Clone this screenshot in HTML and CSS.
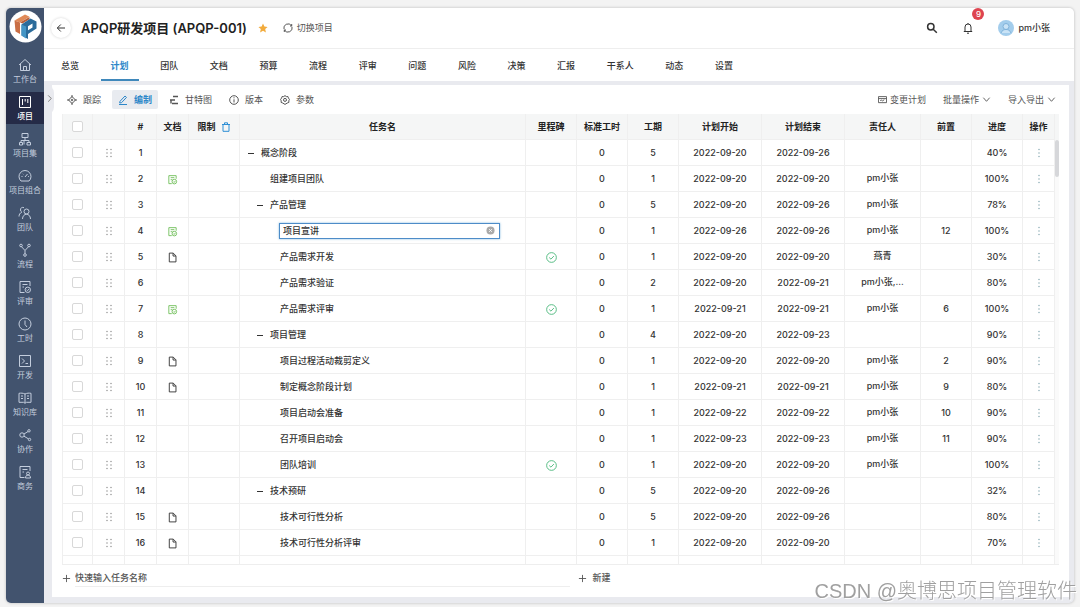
FILE: index.html
```html
<!DOCTYPE html>
<html lang="zh-CN">
<head>
<meta charset="utf-8">
<meta name="viewport" content="width=device-width, initial-scale=1">
<title>APQP研发项目 (APQP-001)</title>
<link rel="stylesheet" href="styles.css">
</head>
<body>
<svg class="sprite" aria-hidden="true">
  <symbol id="i-doc" viewBox="0 0 12 12"><path d="M2.500 1.200h4.300l3 3v6.600H2.500zM6.600 1.400v3h3"/></symbol>
  <symbol id="i-docok" viewBox="0 0 12 12"><path d="M10 5.200V1.800H2v8.700h3.200M4 4h4M4 6.200h1.800"/><circle cx="8" cy="8.300" r="2.500"/><path d="M6.900 8.300l.9.9 1.400-1.600"/></symbol>
  <symbol id="i-ok" viewBox="0 0 12 12"><circle cx="6" cy="6" r="5.300"/><path d="M3.500 6l1.900 1.800 3.200-3.400"/></symbol>
  <symbol id="i-down" viewBox="0 0 10 10"><path d="M1.500 3L5 7l3.500-4"/></symbol>
</svg>
<div class="app">
  <aside class="sidebar">
    <a class="logo" href="#" aria-label="首页">
      <svg viewBox="0 0 33 33"><circle cx="16.500" cy="16.500" r="16" fill="#fff"/><path d="M5.500 10.500L16 4.500l4.500 2.200-9.500 5.800z" fill="#e08a58"/><path d="M5.500 10.500l5.500 2V24l-4.500-2.500z" fill="#c96f45"/><path d="M11 12.500L20.500 7v2.200l-7 4.300z" fill="#b85f3a"/><path d="M12.500 14.500l9-6 6 3v7l-8.500 5.500v5l-6.500-3.500z" fill="#2c6c9b"/><path d="M12.500 14.500l4.500 2v12l-4.500-3z" fill="#4496c6"/><path d="M19 16.200l4.500-2.800v4L19 20.200z" fill="#fff"/></svg>
    </a>
    <nav class="menu" aria-label="主导航">
      <a href="#"><svg viewBox="0 0 14 14"><path d="M1 7l6-5.500L13 7M2.500 6v6.500h9V6M5.500 12.500V8.500h3v4"/></svg>工作台</a>
      <a href="#" class="active"><svg viewBox="0 0 14 14"><path d="M1.500 1.500h11v11h-11zM4.500 4v6M7.200 4v2.500M9.800 4v4"/></svg>项目</a>
      <a href="#"><svg viewBox="0 0 14 14"><path d="M4 1.500h6v4H4zM7 5.500v3M3 10.500v-2h8v2M1.500 10.500h3v2.500h-3zM6 8.500v4M9 10.500h3.500V13H9z"/></svg>项目集</a>
      <a href="#"><svg viewBox="0 0 14 14"><path d="M3 12a6 6 0 1 1 8 0zM7 8l2.500-3M3.500 7.500h1M4.800 4.800l.5.5M10 7.500h.8"/></svg>项目组合</a>
      <a href="#"><svg viewBox="0 0 14 14"><circle cx="8.500" cy="5.500" r="2.500"/><path d="M4.500 13c0-3 2-4.800 4-4.800s4 1.800 4 4.800M6 1.700C4 .8 2.300 2 2.500 4c0 1 .5 1.700 1.300 2.200C2 7 1 8.500 1 10.500"/></svg>团队</a>
      <a href="#"><svg viewBox="0 0 14 14"><circle cx="3" cy="2.500" r="1.300"/><circle cx="11" cy="2.500" r="1.300"/><circle cx="7" cy="12" r="1.300"/><path d="M3.500 3.700L7 7.500l3.500-3.800M7 7.500v3.200"/></svg>流程</a>
      <a href="#"><svg viewBox="0 0 14 14"><path d="M12 6V1.500H2v11h4.500M4.500 4.500h5M4.500 7H6"/><circle cx="9.800" cy="9.800" r="2.700"/><path d="M8.600 9.800l.9.900 1.600-1.700"/></svg>评审</a>
      <a href="#"><svg viewBox="0 0 14 14"><circle cx="7" cy="7" r="6"/><path d="M7 3.500V7.500l2 2.500"/></svg>工时</a>
      <a href="#"><svg viewBox="0 0 14 14"><path d="M1.500 1.500h11v11h-11zM4 4.500L6.500 7 4 9.500M7.500 9.500H10"/></svg>开发</a>
      <a href="#"><svg viewBox="0 0 14 14"><path d="M7 3C5 2 3 2 1 2.300v9h4.500L7 12.300l1.500-1H13v-9C11 2 9 2 7 3v9M3 5h2M3 7.500h2M9 5h2M9 7.500h2"/></svg>知识库</a>
      <a href="#"><svg viewBox="0 0 14 14"><circle cx="4" cy="7" r="2.200"/><circle cx="11" cy="2.800" r="1.200"/><circle cx="11.500" cy="11.500" r="1.200"/><path d="M6 6l4-2.500M6 8.200l4.500 2.700"/></svg>协作</a>
      <a href="#"><svg viewBox="0 0 14 14"><path d="M12 6V1.500H2v11h4.500M4.500 4.500h5M4.500 7H6"/><circle cx="10" cy="8.500" r="1.500"/><path d="M7.500 13c0-1.800 1-3 2.500-3s2.500 1.200 2.500 3z"/></svg>商务</a>
    </nav>
  </aside>
  <main class="main">
    <header class="topbar">
      <button class="back" aria-label="返回"><svg viewBox="0 0 10 10"><path d="M9 5H1.500M4.800 1.500L1.300 5l3.500 3.500"/></svg></button>
      <h1>APQP研发项目 (APQP-001)</h1>
      <svg class="star" viewBox="0 0 10 10"><path d="M5 .5l1.400 3 3.200.4-2.400 2.200.7 3.300L5 7.800 2.100 9.400l.7-3.300L.4 3.900l3.200-.4z"/></svg>
      <button class="switch"><svg viewBox="0 0 10 10"><path d="M1 6.200A4.200 4.200 0 0 1 8.500 2.700M9 3.800A4.200 4.200 0 0 1 1.500 7.300M8.700 1v2H7M1.300 9V7H3"/></svg>切换项目</button>
      <div class="user">
        <button aria-label="搜索"><svg class="icon-lg search" viewBox="0 0 12 12"><circle cx="4.800" cy="4.800" r="3.200"/><path d="M7.200 7.200L10.800 10.800"/></svg></button>
        <button class="bell" aria-label="通知"><svg class="icon-lg" viewBox="0 0 12 12"><path d="M1.800 9.500h8.400M3 9.500V5a3 3 0 0 1 6 0v4.500M5 11.200h2M6 1v1"/></svg><span class="badge">9</span></button>
        <a class="account" href="#"><svg viewBox="0 0 16 16"><circle cx="8" cy="8" r="8" fill="#a3cdec" stroke="none"/><circle cx="8" cy="6.500" r="3" fill="#c9e3f6" stroke="#7fb2da"/><path d="M3 13c1-2.800 3-3.500 5-3.500s4 .7 5 3.500" fill="#c9e3f6" stroke="#7fb2da"/></svg>pm小张</a>
      </div>
    </header>
    <nav class="tabs" aria-label="项目导航">
      <div class="tab-list">
        <a href="#">总览</a><a href="#" class="active">计划</a><a href="#">团队</a><a href="#">文档</a><a href="#">预算</a><a href="#">流程</a><a href="#">评审</a><a href="#">问题</a><a href="#">风险</a><a href="#">决策</a><a href="#">汇报</a><a href="#">干系人</a><a href="#">动态</a><a href="#">设置</a>
      </div>
    </nav>
    <section class="panel">
      <button class="handle" aria-label="展开"><svg viewBox="0 0 10 10"><path d="M3.500 1.500L7 5 3.500 8.500"/></svg></button>
      <div class="toolbar">
        <button><svg viewBox="0 0 10 10"><path d="M5 1.500L8.500 5 5 8.500 1.500 5zM5 0v2.500M5 7.500V10M0 5h2.500M7.500 5H10"/><circle cx="5" cy="5" r=".8"/></svg>跟踪</button>
        <button class="active"><svg viewBox="0 0 10 10"><path d="M2 6.300L7 1l1.500 1.400-5 5.300L1.700 8zM1 9.500h8"/></svg>编制</button>
        <button><svg viewBox="0 0 10 10"><path d="M4 1.500h5M1 5h5M3 8.500h6M2 5v3.500" stroke-width="1.400"/></svg>甘特图</button>
        <button><svg viewBox="0 0 10 10"><circle cx="5" cy="5" r="4.300"/><path d="M5 4.300v3.200M5 2.300v1"/></svg>版本</button>
        <button><svg viewBox="0 0 10 10"><path d="M5 .6l1.300 1 1.600-.1.500 1.600 1.100 1.200-.7 1.500.1 1.600-1.600.6L5 9.400 2.700 8l-1.600-.6.1-1.600L.5 4.300l1.100-1.200.5-1.600 1.600.1z"/><circle cx="5" cy="4.900" r="1.500"/></svg>参数</button>
        <div class="toolbar-right">
          <button><svg viewBox="0 0 10 10"><path d="M.5 1.800h9v6.700h-9zM.5 4h9M2.500 6.500l1-1 1.500 1 2-1.200"/></svg>变更计划</button>
          <button>批量操作<svg><use href="#i-down"/></svg></button>
          <button>导入导出<svg><use href="#i-down"/></svg></button>
        </div>
      </div>
      <div class="grid">
        <table>
          <colgroup><col class="w-xs"><col class="w-sm"><col class="w-sm"><col class="w-sm"><col class="w-md"><col><col class="w-md"><col class="w-md"><col class="w-md"><col class="w-lg"><col class="w-lg"><col class="w-owner"><col class="w-md"><col class="w-md"><col class="w-sm"></colgroup>
          <thead>
            <tr>
              <th><input type="checkbox" aria-label="全选"></th><th></th><th>#</th><th>文档</th>
              <th class="limit">限制<svg viewBox="0 0 10 10"><path d="M1 2.500h8M2 2.500v6.800h6V2.500M3.500 2.300V.8h3v1.500"/></svg></th>
              <th>任务名</th><th>里程碑</th><th>标准工时</th><th>工期</th><th>计划开始</th><th>计划结束</th><th>责任人</th><th>前置</th><th>进度</th><th>操作</th>
            </tr>
          </thead>
          <tbody id="rows"></tbody>
        </table>
        <div class="track"><div class="thumb"></div></div>
      </div>
      <div class="quick">
        <label class="quick-field"><svg viewBox="0 0 10 10"><path d="M5 1v8M1 5h8"/></svg><input type="text" placeholder="快速输入任务名称" aria-label="快速输入任务名称"></label>
        <button><svg viewBox="0 0 10 10"><path d="M5 1v8M1 5h8"/></svg>新建</button>
      </div>
    </section>
  </main>
</div>
<div class="watermark">CSDN @奥博思项目管理软件</div>
<script src="script.js"></script>
</body>
</html>
```
FILE: styles.css
```css
* { box-sizing: border-box; }

body {
  margin: 0;
  min-height: 100vh;
  padding: 8px 6px 4px;
  display: flex;
  background: #f3f3f3;
  color: #333;
  font: 500 9px/14px Inter, "Noto Sans CJK SC", sans-serif;
}

a { color: inherit; text-decoration: none; }

button {
  margin: 0;
  padding: 0;
  border: 0;
  background: none;
  color: inherit;
  font: inherit;
  cursor: pointer;
}

svg {
  flex: none;
  width: 10px;
  height: 10px;
  fill: none;
  stroke: currentColor;
  stroke-width: 1;
}

.sprite { position: absolute; width: 0; height: 0; }

.app {
  flex: 1;
  min-width: 0;
  display: flex;
  background: #e9eaef;
  border-radius: 5px;
  overflow: hidden;
  box-shadow: 0 0 3px rgba(0, 0, 0, 0.25);
}

/* Sidebar */
.sidebar {
  flex: none;
  width: 38px;
  background: #42536e;
  color: #c3cddd;
}

.logo { display: flex; justify-content: center; padding: 2px 0 12px; }
.logo svg { width: 33px; height: 33px; stroke: none; }

.menu { display: flex; flex-direction: column; gap: 5px; }

.menu a {
  display: flex;
  flex-direction: column;
  align-items: center;
  gap: 2px;
  padding: 3px 0;
  font-size: 8px;
  line-height: 10px;
  font-weight: 400;
  white-space: nowrap;
}

.menu svg { width: 14px; height: 14px; }
.menu .active { background: #252b47; color: #fff; font-weight: 500; }

/* Header */
.main { flex: 1; min-width: 0; display: flex; flex-direction: column; }

.topbar {
  display: flex;
  align-items: center;
  height: 41px;
  padding: 0 24px 0 7px;
  background: #fff;
  border-bottom: 1px solid #eee;
}

.back {
  display: grid;
  place-items: center;
  width: 20px;
  height: 20px;
  border-radius: 50%;
  box-shadow: 0 0 3px rgba(0, 0, 0, 0.18);
}

h1 { margin: 0 11px 0 10px; font-size: 13px; line-height: 20px; font-weight: 600; color: #222; }
.star { fill: #f2ab3c; stroke: none; }
.switch { display: flex; align-items: center; gap: 4px; margin-left: 15px; color: #555; font-weight: 400; }

.user { display: flex; align-items: center; gap: 24px; margin-left: auto; }
.user button { display: flex; }
.icon-lg { width: 12px; height: 12px; }
.search { stroke-width: 1.5; }
.bell { position: relative; }

.badge {
  position: absolute;
  top: -14px;
  left: 10px;
  width: 12px;
  height: 12px;
  border-radius: 50%;
  background: #de4450;
  color: #fff;
  font-size: 8px;
  line-height: 12px;
}

.account { display: flex; align-items: center; gap: 4px; }
.account svg { width: 16px; height: 16px; }

/* Tabs */
.tabs { padding: 0 7px; background: #fff; }
.tab-list { display: flex; justify-content: space-between; max-width: 692px; }
.tab-list a { padding: 10px 10px 6px; border-bottom: 2px solid transparent; }
.tab-list .active { color: #2d87c9; border-color: #3f88bb; font-weight: 600; }

/* Plan panel */
.panel {
  position: relative;
  flex: 1;
  display: flex;
  flex-direction: column;
  margin: 4px 5px 6px 8px;
  padding: 0 10px;
  background: #fff;
}

.handle {
  position: absolute;
  top: 0;
  left: -8px;
  width: 10px;
  height: 30px;
  padding-left: 1px;
  border-radius: 0 8px 8px 0;
  background: #e9eaef;
  color: #777;
}

.handle svg { width: 9px; height: 9px; }

.toolbar {
  display: flex;
  gap: 5px;
  margin: 5px -3px 5px -1px;
  color: #555;
}

.toolbar button {
  display: flex;
  align-items: center;
  gap: 6px;
  height: 19px;
  padding: 0 6px;
  border-radius: 2px;
  font-weight: 400;
  white-space: nowrap;
}

.toolbar .active { background: #e8ebf0; color: #2d87c9; font-weight: 600; }
.toolbar-right { display: flex; gap: 5px; margin-left: auto; }
.toolbar-right button { gap: 3px; }
.toolbar-right svg { width: 9px; height: 9px; }

.grid { display: flex; border-bottom: 1px solid #eee; }

table {
  flex: 1;
  min-width: 0;
  table-layout: fixed;
  border-collapse: separate;
  border-spacing: 0;
}

.w-xs { width: 31px; }
.w-sm { width: 32px; }
.w-md { width: 51px; }
.w-lg { width: 83px; }
.w-owner { width: 76px; }

th, td {
  height: 26px;
  padding: 0;
  border: solid #efefef;
  border-width: 0 1px 1px 0;
  text-align: center;
  vertical-align: middle;
  white-space: nowrap;
}

th:first-child, td:first-child { border-left-width: 1px; }
th { background: #f5f6f6; font-weight: 600; color: #222; }
th svg, td svg { vertical-align: middle; }
.limit svg { margin-left: 5px; color: #2d8fd5; }
.rest td { height: 8px; border-bottom: 0; }
td.owner { padding-bottom: 2px; }

input[type="checkbox"] {
  appearance: none;
  display: block;
  width: 11px;
  height: 11px;
  margin: 0 auto;
  border: 1px solid #d8d8d8;
  border-radius: 2px;
  background: #fff;
}

.drag, .more { color: #888; fill: currentColor; stroke: none; }
.more { color: #7fa3ad; }
.doc { width: 11px; height: 11px; color: #333; }
.doc-ok { width: 11px; height: 11px; color: #72bf5c; }
.ok { width: 11px; height: 11px; color: #4cb87c; }

.name { display: flex; align-items: center; gap: 6px; height: 25px; padding-left: 7px; }
.name.level-1 { padding-left: 16px; }
.name.level-2 { padding-left: 40px; }
.name.leaf-1 { padding-left: 30px; }
.name svg { width: 8px; height: 8px; }
.name button { display: flex; }

.edit {
  flex: 1;
  display: flex;
  align-items: center;
  height: 16px;
  margin: 0 25px 0 -1px;
  padding: 0 4px 0 3px;
  border: 1px solid #4d8cc8;
  box-shadow: 0 0 2px rgba(45, 135, 201, 0.6);
}

.edit input {
  flex: 1;
  min-width: 0;
  padding: 0;
  border: 0;
  outline: 0;
  background: none;
  color: inherit;
  font: inherit;
}

.edit svg { width: 9px; height: 9px; }

.track { width: 4px; padding-top: 26px; background: linear-gradient(#f5f6f6 26px, #fafafa 26px); }
.thumb { height: 37px; border-radius: 2px; background: #d6d7da; }

/* Quick add */
.quick { display: flex; align-items: center; gap: 8px; padding: 4px 0 10px; color: #555; }
.quick-field { flex: 0 0 51%; display: flex; align-items: center; gap: 4px; }
.quick svg { width: 9px; height: 9px; }

.quick input {
  flex: 1;
  min-width: 0;
  height: 18px;
  padding: 0;
  border: 0;
  border-bottom: 1px solid #eee;
  outline: 0;
  font: inherit;
}

.quick input::placeholder { color: #555; opacity: 1; }
.quick button { display: flex; align-items: center; gap: 5px; }

.watermark {
  position: fixed;
  right: 3px;
  bottom: 2px;
  color: #a0a0a0;
  font: 300 20px/28px "Liberation Sans", "Noto Sans CJK SC", sans-serif;
  text-shadow: 1px 1px 0 #fff;
  pointer-events: none;
}
```
FILE: script.js
```js
// [level, group?, name, document, milestone, duration, start, end, owner, predecessor, progress]
const tasks = [
  [0, true, "概念阶段", "", false, 5, "09-20", "09-26", "", "", 40],
  [1, false, "组建项目团队", "ok", false, 1, "09-20", "09-20", "pm小张", "", 100],
  [1, true, "产品管理", "", false, 5, "09-20", "09-26", "pm小张", "", 78],
  [2, false, "项目宣讲", "ok", false, 1, "09-26", "09-26", "pm小张", "12", 100],
  [2, false, "产品需求开发", "doc", true, 1, "09-20", "09-20", "燕青", "", 30],
  [2, false, "产品需求验证", "", false, 2, "09-20", "09-21", "pm小张,...", "", 80],
  [2, false, "产品需求评审", "ok", true, 1, "09-21", "09-21", "pm小张", "6", 100],
  [1, true, "项目管理", "", false, 4, "09-20", "09-23", "", "", 90],
  [2, false, "项目过程活动裁剪定义", "doc", false, 1, "09-20", "09-20", "pm小张", "2", 90],
  [2, false, "制定概念阶段计划", "doc", false, 1, "09-21", "09-21", "pm小张", "9", 80],
  [2, false, "项目启动会准备", "", false, 1, "09-22", "09-22", "pm小张", "10", 90],
  [2, false, "召开项目启动会", "", false, 1, "09-23", "09-23", "pm小张", "11", 90],
  [2, false, "团队培训", "", true, 1, "09-20", "09-20", "pm小张", "", 100],
  [1, true, "技术预研", "", false, 5, "09-20", "09-26", "", "", 32],
  [2, false, "技术可行性分析", "doc", false, 5, "09-20", "09-26", "", "", 80],
  [2, false, "技术可行性分析评审", "doc", false, 1, "09-20", "09-20", "", "", 70],
];
const editing = 4;

const dots = (xs) => xs.map((x) => [1.5, 5, 8.5].map((y) => `<circle cx="${x}" cy="${y}" r=".7"/>`).join("")).join("");
const drag = `<svg class="drag" viewBox="0 0 10 10">${dots([3, 7])}</svg>`;
const more = `<svg class="more" viewBox="0 0 10 10">${dots([5])}</svg>`;
const docs = {
  "": "",
  doc: '<svg class="doc"><use href="#i-doc"/></svg>',
  ok: '<svg class="doc-ok"><use href="#i-docok"/></svg>',
};
const fold = '<button aria-label="收起"><svg viewBox="0 0 8 8"><path d="M1 4.500h6"/></svg></button>';
const clear = '<button aria-label="清除"><svg viewBox="0 0 10 10"><circle cx="5" cy="5" r="4.500" fill="#aaa" stroke="none"/><path d="M3.500 3.500l3 3M6.500 3.500l-3 3" stroke="#fff"/></svg></button>';

function nameCell(level, group, name, n) {
  if (n === editing) {
    return `<div class="name level-2"><div class="edit"><input type="text" value="${name}" aria-label="任务名">${clear}</div></div>`;
  }
  const kind = group ? `level-${level}` : level === 1 ? "leaf-1" : "level-2";
  return `<div class="name ${kind}">${group ? fold : ""}<span>${name}</span></div>`;
}

document.getElementById("rows").innerHTML = tasks.map((t, i) => {
  const [level, group, name, doc, milestone, days, start, end, owner, prev, progress] = t;
  const n = i + 1;
  return `<tr>
    <td><input type="checkbox" aria-label="选择任务 ${n}"></td><td>${drag}</td><td>${n}</td>
    <td>${docs[doc]}</td><td></td><td>${nameCell(level, group, name, n)}</td>
    <td>${milestone ? '<svg class="ok"><use href="#i-ok"/></svg>' : ""}</td>
    <td>0</td><td>${days}</td><td>2022-${start}</td><td>2022-${end}</td>
    <td class="owner">${owner}</td><td>${prev}</td><td>${progress}%</td><td>${more}</td>
  </tr>`;
}).join("") + `<tr class="rest">${"<td></td>".repeat(15)}</tr>`;
```
